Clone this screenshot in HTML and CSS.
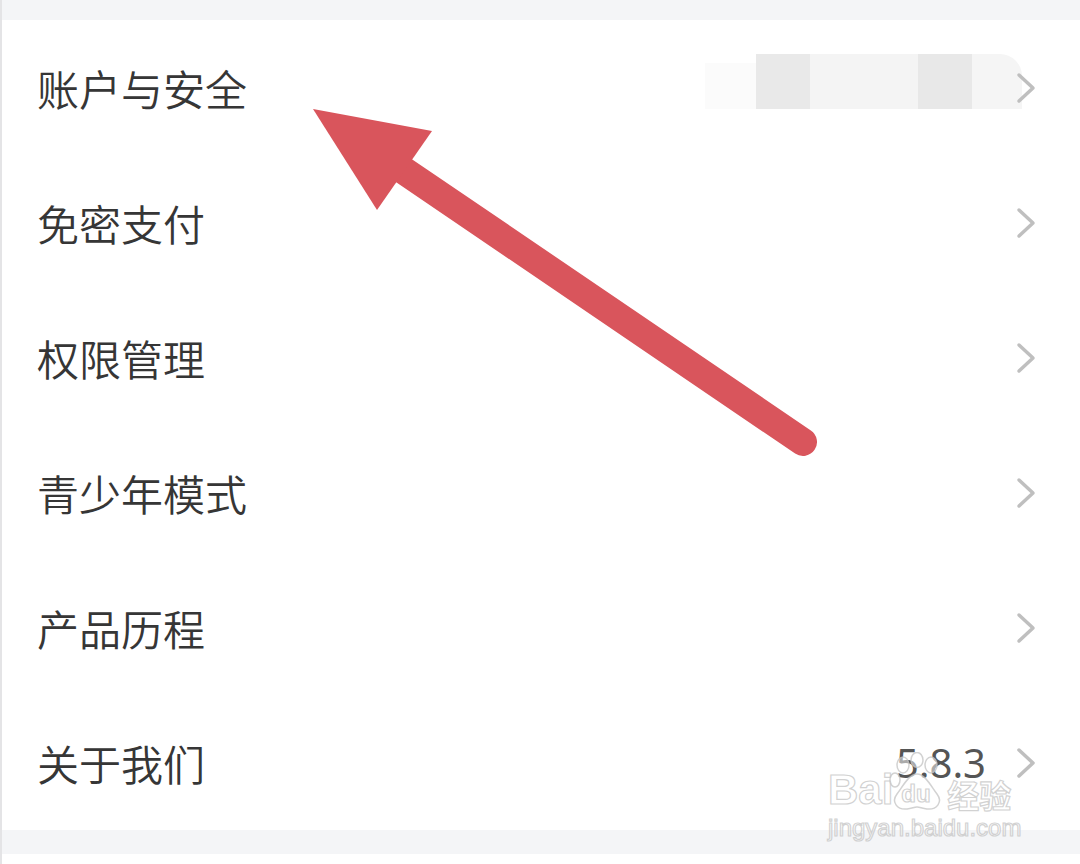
FILE: index.html
```html
<!DOCTYPE html>
<html lang="zh-CN">
<head>
<meta charset="utf-8">
<title>设置</title>
<link rel="stylesheet" href="styles.css">
</head>
<body>
<div class="page">
  <div class="band band-top"></div>
  <ul class="menu">
    <li class="row">
      <span class="label">账户与安全</span>
      <span class="redact">
        <i class="r r0"></i><i class="r r1"></i><i class="r r2"></i><i class="r r3"></i><i class="r r4"></i>
      </span>
      <svg class="chev" viewBox="0 0 20 32"><path d="M3 3 L17 16 L3 29"/></svg>
    </li>
    <li class="row">
      <span class="label">免密支付</span>
      <svg class="chev" viewBox="0 0 20 32"><path d="M3 3 L17 16 L3 29"/></svg>
    </li>
    <li class="row">
      <span class="label">权限管理</span>
      <svg class="chev" viewBox="0 0 20 32"><path d="M3 3 L17 16 L3 29"/></svg>
    </li>
    <li class="row">
      <span class="label">青少年模式</span>
      <svg class="chev" viewBox="0 0 20 32"><path d="M3 3 L17 16 L3 29"/></svg>
    </li>
    <li class="row">
      <span class="label">产品历程</span>
      <svg class="chev" viewBox="0 0 20 32"><path d="M3 3 L17 16 L3 29"/></svg>
    </li>
    <li class="row">
      <span class="label">关于我们</span>
      <span class="version">5.8.3</span>
      <svg class="chev" viewBox="0 0 20 32"><path d="M3 3 L17 16 L3 29"/></svg>
    </li>
  </ul>
  <div class="band band-bottom"></div>

  <svg class="arrow" viewBox="0 0 1080 864" width="1080" height="864">
    <line x1="398" y1="168" x2="801" y2="442" />
    <polygon points="311,109 430,131 375,210" />
  </svg>

  <div class="watermark">
    <div class="wm-line">
      <span class="wm-bai">Bai</span>
      <span class="wm-paw">
        <svg viewBox="0 0 56 60" width="56" height="60">
          <ellipse cx="14" cy="13" rx="6" ry="8"/>
          <ellipse cx="28" cy="8" rx="6" ry="7.5"/>
          <ellipse cx="42" cy="13" rx="6" ry="8"/>
          <ellipse cx="6" cy="28" rx="5" ry="7"/>
          <path d="M28 22 C20 22 14 34 8 42 C2 50 8 58 18 57 C23 56.5 25 55 28 55 C31 55 33 56.5 38 57 C48 58 54 50 48 42 C42 34 36 22 28 22 Z"/>
        </svg>
        <span class="wm-du">du</span>
      </span>
      <span class="wm-jy">经验</span>
    </div>
    <div class="wm-url">jingyan.baidu.com</div>
  </div>
</div>
</body>
</html>
```
FILE: styles.css
```css
html, body {
  margin: 0;
  padding: 0;
  background: #ffffff;
}
.page {
  position: relative;
  width: 1080px;
  height: 864px;
  overflow: hidden;
  box-sizing: border-box;
  border-left: 2px solid #e4e4e6;
  font-family: "Noto Sans CJK SC", "Noto Sans", sans-serif;
}
.band {
  background: #f4f5f7;
}
.band-top {
  height: 20px;
}
.band-bottom {
  height: 24px;
}
.menu {
  list-style: none;
  margin: 0;
  padding: 0;
}
.row {
  height: 135px;
  display: flex;
  align-items: center;
  padding: 0 44px 0 35px;
}
.label {
  flex: 1;
  font-size: 42px;
  color: #363636;
  line-height: 1;
  font-weight: 350;
}
.chev {
  width: 20px;
  height: 32px;
  flex: none;
}
.chev path {
  fill: none;
  stroke: #bfbfbf;
  stroke-width: 3.5;
  stroke-linecap: round;
  stroke-linejoin: round;
}
.redact {
  display: flex;
  align-items: flex-end;
  height: 56px;
  margin-bottom: 14px;
  margin-right: -6px;
}
.r {
  display: block;
  height: 55px;
}
.r0 { width: 51px; height: 46px; background: #fbfbfb; }
.r1 { width: 54px; background: #e9e9e9; }
.r2 { width: 108px; background: #f4f4f4; }
.r3 { width: 54px; background: #e8e8e8; }
.r4 { width: 50px; background: #f5f5f5; border-top-right-radius: 22px; }
.version {
  font-family: "Noto Sans", "Roboto", sans-serif;
  font-size: 40px;
  color: #555555;
  margin-right: 30px;
  line-height: 1;
}
.arrow {
  position: absolute;
  left: 0;
  top: 0;
  pointer-events: none;
}
.arrow line {
  stroke: #d9555c;
  stroke-width: 28;
  stroke-linecap: round;
}
.arrow polygon {
  fill: #d9555c;
}
.watermark {
  position: absolute;
  left: 826px;
  top: 752px;
  width: 200px;
  color: rgba(255, 255, 255, 0.5);
  -webkit-text-stroke: 1.2px rgba(195, 195, 195, 0.75);
  font-family: "Liberation Sans", sans-serif;
}
.wm-line {
  display: flex;
  align-items: flex-end;
  height: 60px;
}
.wm-bai {
  font-size: 42px;
  font-weight: bold;
  line-height: 1;
  margin-bottom: 1px;
}
.wm-paw {
  position: relative;
  width: 56px;
  height: 60px;
  margin-left: -4px;
}
.wm-paw svg {
  display: block;
}
.wm-paw ellipse, .wm-paw path {
  fill: rgba(255, 255, 255, 0.5);
  stroke: rgba(195, 195, 195, 0.75);
  stroke-width: 1.5;
}
.wm-du {
  position: absolute;
  left: 12px;
  top: 30px;
  font-size: 24px;
  font-weight: bold;
  line-height: 1;
}
.wm-jy {
  font-family: "Noto Sans CJK SC", sans-serif;
  font-size: 32px;
  font-weight: bold;
  line-height: 1;
  margin-left: 2px;
  margin-bottom: 2px;
}
.wm-url {
  font-size: 24px;
  line-height: 1;
  margin-top: 4px;
}
```
